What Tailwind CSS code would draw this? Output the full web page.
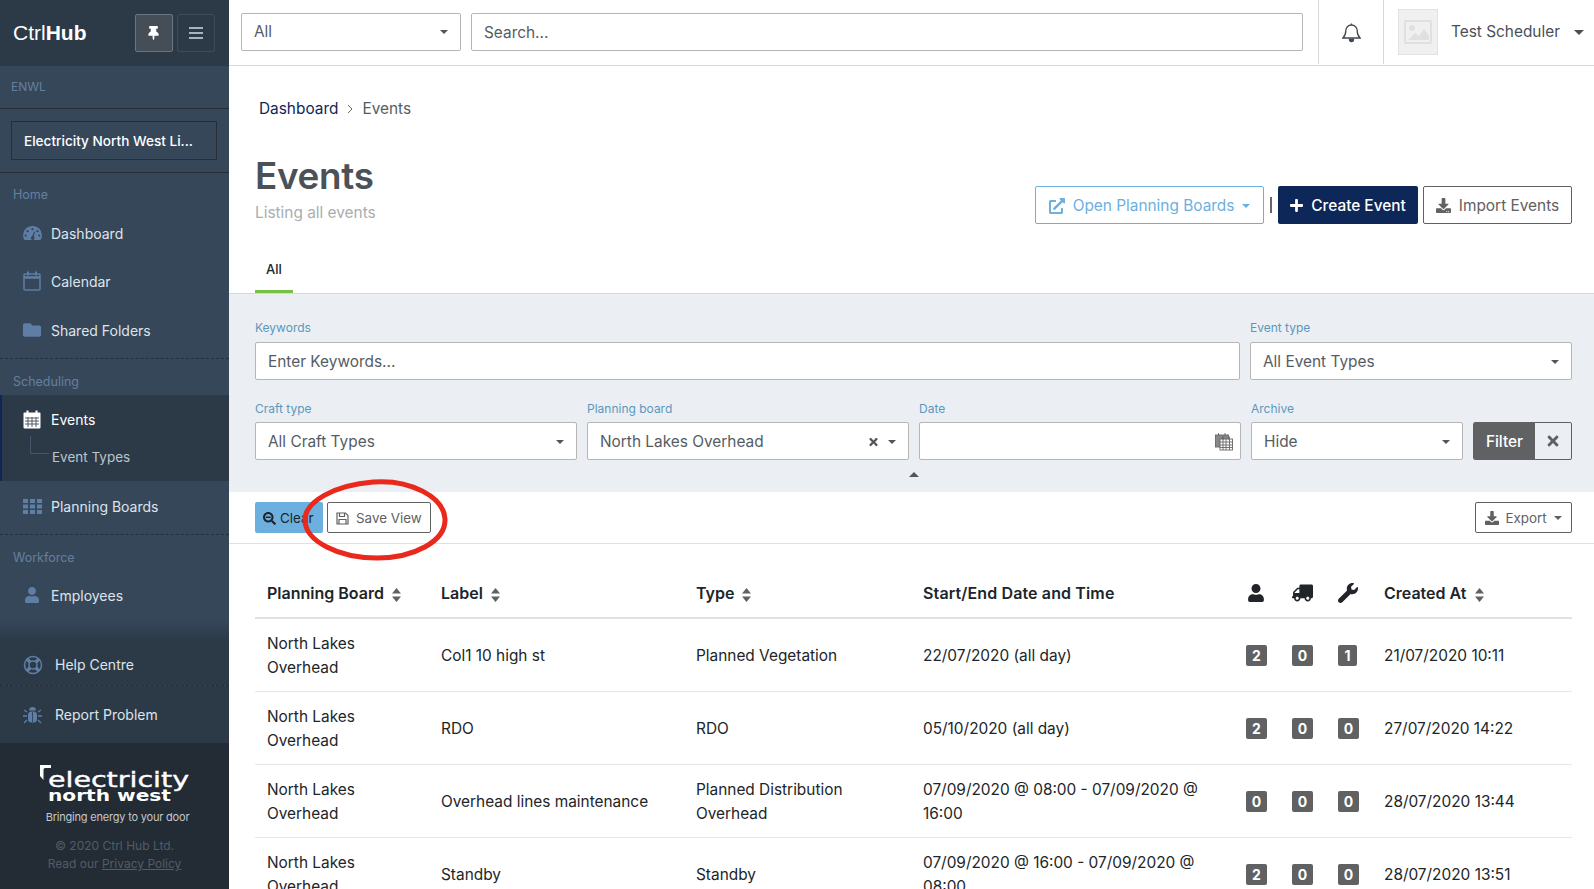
<!DOCTYPE html>
<html lang="en">
<head>
  <meta charset="UTF-8">
  <title>Events - CtrlHub</title>
  <script src="https://cdn.jsdelivr.net/npm/@tailwindcss/browser@4"></script>
</head>
<body class="bg-white font-['Inter',sans-serif] text-[#212529] overflow-hidden">
<div class="relative flex h-[889px] w-[1594px] overflow-hidden">

  <!-- sidebar -->
  <aside class="flex h-full w-[229px] shrink-0 flex-col bg-[#36475a] text-[14px] text-[#dfe4ea]">
    <div class="flex h-[66px] shrink-0 items-center bg-[#2c3a48] pl-[13px]">
      <div class="pb-[1px] font-['Liberation_Sans',sans-serif] text-[21px] leading-none text-white">Ctrl<span class="font-bold">Hub</span></div>
      <div class="ml-[48px] flex gap-[4px]">
        <button class="flex h-[38px] w-[38px] items-center justify-center rounded-[2px] border border-[#6b7580] bg-[#454d57]">
          <svg class="h-[14px] w-[11px] fill-white" viewBox="0 0 384 512"><path d="M298.028 214.267L285.793 96H328c13.255 0 24-10.745 24-24V24c0-13.255-10.745-24-24-24H56C42.745 0 32 10.745 32 24v48c0 13.255 10.745 24 24 24h42.207L85.972 214.267C37.465 236.82 0 277.261 0 328c0 13.255 10.745 24 24 24h136v104.007c0 1.242.289 2.467.845 3.578l24 48c2.941 5.882 11.364 5.893 14.31 0l24-48a8.008 8.008 0 0 0 .845-3.578V352h136c13.255 0 24-10.745 24-24-.001-51.183-37.983-91.42-85.972-113.733z"/></svg>
        </button>
        <button class="flex h-[38px] w-[38px] flex-col items-center justify-center gap-[3px] rounded-[2px] border border-[#3d4b5a]">
          <span class="h-[2px] w-[14px] bg-[#a9b3bd]"></span>
          <span class="h-[2px] w-[14px] bg-[#a9b3bd]"></span>
          <span class="h-[2px] w-[14px] bg-[#a9b3bd]"></span>
        </button>
      </div>
    </div>

    <div class="flex h-[43px] shrink-0 items-center border-b border-[#262f39] pl-[11px] text-[12px] text-[#64809e]">ENWL</div>
    <div class="flex h-[64px] shrink-0 items-center border-b border-[#262f39] px-[11px]">
      <div class="flex h-[39px] w-[206px] items-center border border-[#262f39] pl-[12px] pt-[1px] text-[13.6px] font-medium text-white">Electricity North West Li...</div>
    </div>

    <div class="flex h-[36px] shrink-0 items-end pb-[7px] pl-[13px] text-[12.5px] leading-[15px] text-[#64809e]">Home</div>
    <a class="flex h-[48px] shrink-0 items-center pl-[23px]">
      <svg class="mr-[9px] h-[17px] w-[19px] fill-[#5e7fa3]" viewBox="0 0 20 18"><path fill-rule="evenodd" d="M10 1a9.600 9.600 0 0 0-10 9.600c0 2.200.7 4.200 1.600 5.400h16.800c.9-1.200 1.600-3.200 1.600-5.400A9.600 9.600 0 0 0 10 1zM10 3.200a1.200 1.200 0 1 1 0 2.400 1.200 1.200 0 0 1 0-2.400zM4.800 5.400a1.200 1.200 0 1 1 0 2.400 1.200 1.200 0 0 1 0-2.400zM15.200 5.400a1.200 1.200 0 1 1 0 2.400 1.200 1.200 0 0 1 0-2.400zM2.800 10a1.200 1.200 0 1 1 0 2.400 1.200 1.200 0 0 1 0-2.400zM17.200 10a1.200 1.200 0 1 1 0 2.400 1.200 1.200 0 0 1 0-2.400zM11.800 6.800l.9.300-1.300 5.200a1.900 1.900 0 1 1-1.700-.3z"/></svg>
      Dashboard
    </a>
    <a class="flex h-[48px] shrink-0 items-center pl-[23px]">
      <svg class="mr-[10px] h-[20px] w-[18px] fill-none stroke-[#5e7fa3]" stroke-width="1.500" viewBox="0 0 18 20"><rect x="1" y="3" width="16" height="16" rx="1"/><path d="M1 6.500h16" stroke-width="2.500"/><path d="M5 0.500v4M13 0.500v4" stroke-width="2"/></svg>
      Calendar
    </a>
    <a class="flex h-[48px] shrink-0 items-center pl-[23px] pt-[2px]">
      <svg class="mr-[10px] h-[18px] w-[18px] fill-[#5e7fa3]" viewBox="0 0 512 512"><path d="M464 128H272l-64-64H48C21.490 64 0 85.490 0 112v288c0 26.510 21.490 48 48 48h416c26.510 0 48-21.490 48-48V176c0-26.510-21.490-48-48-48z"/></svg>
      Shared Folders
    </a>
    <div class="mt-[5px] border-b border-dashed border-[#262f39]"></div>

    <div class="flex h-[36px] shrink-0 items-end pb-[6px] pl-[13px] text-[12.5px] leading-[15px] text-[#64809e]">Scheduling</div>
    <div class="h-[86px] shrink-0 border-l-2 border-[#0d2759] bg-[#2c3a48]">
      <a class="flex h-[48px] items-center pl-[21px] text-white">
        <svg class="mr-[10px] h-[19px] w-[18px]" viewBox="0 0 18 19"><rect x="0.500" y="2.500" width="17" height="16" rx="1" fill="#fff"/><path d="M4.500 0.500v4M13.500 0.500v4" stroke="#fff" stroke-width="2"/><path d="M2 8h14M2 11h14M2 14h14M5 7v10M9 7v10M13 7v10" stroke="#2c3a48" stroke-width="0.800"/></svg>
        Events
      </a>
      <div class="relative flex h-[27px] items-center pl-[50px] pt-[2px] text-[13.500px] text-[#bcc4cd]">
        <span class="absolute left-[28px] top-[-7px] h-[18px] w-[19px] border-b border-l border-[#43566b]"></span>
        Event Types
      </div>
    </div>
    <a class="flex h-[48px] shrink-0 items-center pl-[23px] pt-[2px]">
      <svg class="mr-[9px] h-[15px] w-[19px] fill-[#5e7fa3]" viewBox="0 0 19 15"><rect width="5" height="4"/><rect x="7" width="5" height="4"/><rect x="14" width="5" height="4"/><rect y="5.500" width="5" height="4"/><rect x="7" y="5.500" width="5" height="4"/><rect x="14" y="5.500" width="5" height="4"/><rect y="11" width="5" height="4"/><rect x="7" y="11" width="5" height="4"/><rect x="14" y="11" width="5" height="4"/></svg>
      Planning Boards
    </a>
    <div class="mt-[5px] border-b border-dashed border-[#262f39]"></div>

    <div class="flex h-[37px] shrink-0 items-end pb-[7px] pl-[13px] text-[12.5px] leading-[15px] text-[#64809e]">Workforce</div>
    <a class="flex h-[48px] shrink-0 items-center pb-[2px] pl-[25px]">
      <svg class="mr-[12px] h-[16px] w-[14px] fill-[#5e7fa3]" viewBox="0 0 448 512"><path d="M224 256c70.700 0 128-57.300 128-128S294.700 0 224 0 96 57.300 96 128s57.300 128 128 128zm89.600 32h-16.700c-22.200 10.200-46.900 16-72.900 16s-50.600-5.800-72.900-16h-16.700C60.200 288 0 348.200 0 422.400V464c0 26.500 21.500 48 48 48h352c26.500 0 48-21.500 48-48v-41.600c0-74.200-60.200-134.400-134.400-134.400z"/></svg>
      Employees
    </a>

    <div class="h-[20px] shrink-0 bg-linear-to-b from-[#36475a] to-[#2c3a48]"></div>
    <div class="flex h-[45px] shrink-0 items-center bg-[#2c3a48] pl-[23px] pt-[4px]">
      <svg class="mr-[12px] h-[20px] w-[20px]" viewBox="0 0 20 20" fill="none" stroke="#5e7fa3"><circle cx="10" cy="10" r="8.500" stroke-width="1.500"/><circle cx="10" cy="10" r="4" stroke-width="1.500"/><path d="M4 4l3.200 3.200M16 4l-3.200 3.200M4 16l3.200-3.200M16 16l-3.200-3.200" stroke-width="3.500"/></svg>
      Help Centre
    </div>
    <div class="border-b border-dashed border-[#262f39]"></div>
    <div class="flex h-[57px] shrink-0 items-center bg-[#2c3a48] pl-[23px]">
      <svg class="mr-[13px] h-[18px] w-[19px]" viewBox="0 0 19 18" fill="#5e7fa3"><path d="M6 4.500a3.500 3.500 0 0 1 7 0z"/><rect x="5" y="5.500" width="9" height="11" rx="3.500"/><path d="M4 6l-3-2M15 6l3-2M4 10H0M15 10h4M4 14l-3 3M15 14l3 3" stroke="#5e7fa3" stroke-width="1.300"/><path d="M9.500 6v10" stroke="#2c3a48" stroke-width="0.800"/></svg>
      Report Problem
    </div>

    <div class="flex h-[146px] shrink-0 flex-col items-center bg-[#232b35] pt-[20px]">
      <svg class="h-[50px] w-[160px]" viewBox="0 0 160 50">
        <path d="M5 2h11v3H10c-1 0-1.500 1-1.500 2v10L5 13z" fill="#fff"/>
        <text x="13" y="24" textLength="141" lengthAdjust="spacingAndGlyphs" fill="#fff" stroke="#fff" stroke-width="0.400" font-family="DejaVu Sans" font-size="22">electricity</text>
        <text x="13" y="38" textLength="123" lengthAdjust="spacingAndGlyphs" fill="#fff" font-family="DejaVu Sans" font-weight="bold" font-size="15">north west</text>
      </svg>
      <div class="ml-[6px] mt-[-4px] text-[11px] leading-[16px] tracking-[-0.2px] text-[#c4c8cc]">Bringing energy to your door</div>
      <div class="mt-[12px] text-center text-[12px] leading-[18px] text-[#535c66]">© 2020 Ctrl Hub Ltd.<br>Read our <span class="underline">Privacy Policy</span></div>
    </div>
  </aside>

  <!-- main -->
  <main class="flex min-w-0 flex-1 flex-col">
    <header class="flex h-[66px] shrink-0 items-center border-b border-[#d8d8d8] pb-[1px] pl-[12px]">
      <div class="flex h-[38px] w-[220px] items-center justify-between rounded-[2px] border border-[#b5b5b5] pl-[12px] pr-[12px] text-[15.4px] text-[#555c63]">
        All
        <span class="h-0 w-0 border-x-[4px] border-t-[4px] border-x-transparent border-t-[#555]"></span>
      </div>
      <input class="ml-[10px] h-[38px] w-[832px] rounded-[2px] border border-[#b5b5b5] px-[12px] text-[15.4px] placeholder:text-[#555c63]" placeholder="Search...">
      <div class="ml-[15px] flex h-full w-[66px] items-center justify-center border-x border-[#d8d8d8]">
        <svg class="h-[21px] w-[19px] fill-none stroke-[#3f464d]" stroke-width="1.300" viewBox="0 0 19 21"><path d="M9.500 1.500v1.500M9.500 3c-3.400 0-5.700 2.600-5.700 5.700 0 4.600-1.500 5.800-3 7.300h17.400c-1.500-1.500-3-2.700-3-7.300C15.200 5.600 12.900 3 9.500 3z"/><path d="M7.500 17.500a2 2 0 0 0 4 0z" fill="#3f464d"/></svg>
      </div>
      <div class="ml-[14px] flex h-[46px] w-[40px] items-center justify-center border border-[#e2e2e2] bg-[#f0f0f0]">
        <svg class="h-[24px] w-[28px]" viewBox="0 0 28 24"><rect x="1" y="1" width="26" height="22" rx="1" fill="none" stroke="#e0e0e0" stroke-width="2"/><circle cx="8" cy="8" r="3" fill="#e0e0e0"/><path d="M4 20l7-7 4 3 5-7 5 7v4z" fill="#e0e0e0"/></svg>
      </div>
      <div class="ml-[13px] text-[15.4px] text-[#4a5057]">Test Scheduler</div>
      <span class="ml-[14px] h-0 w-0 border-x-[5px] border-t-[5px] border-x-transparent border-t-[#4a5057]"></span>
    </header>

    <div class="shrink-0 pl-[26px] pr-[22px]">
      <div class="mt-[31px] flex h-[24px] items-center pl-[4px] text-[15.4px]">
        <span class="text-[#0d2759]">Dashboard</span>
        <svg class="mx-[9px] h-[10px] w-[6px] fill-none stroke-[#666]" viewBox="0 0 6 10"><path d="M1 1l4 4-4 4"/></svg>
        <span class="text-[#555c63]">Events</span>
      </div>
      <div class="mt-[33px] flex items-end justify-between">
        <div>
          <h1 class="text-[36.8px] font-semibold leading-[44px] tracking-[-0.3px] text-[#4b5157]">Events</h1>
          <div class="mt-[2px] pt-[1px] text-[15.4px] leading-[23px] text-[#a9adb1]">Listing all events</div>
        </div>
        <div class="flex items-center text-[15.4px]">
          <button class="flex h-[38px] w-[229px] items-center justify-center rounded-[2px] border border-[#6cb0e0] pt-[1px] text-[#6cb0e0]">
            <svg class="mr-[8px] h-[16px] w-[16px] fill-[#6cb0e0]" viewBox="0 0 512 512"><path d="M432 320H400a16 16 0 0 0-16 16V448H64V128H208a16 16 0 0 0 16-16V80a16 16 0 0 0-16-16H48A48 48 0 0 0 0 112V464a48 48 0 0 0 48 48H400a48 48 0 0 0 48-48V336A16 16 0 0 0 432 320ZM488 0h-128c-21.370 0-32.050 25.910-17 41l35.730 35.730L135 320.370a24 24 0 0 0 0 34L157.670 377a24 24 0 0 0 34 0L435.280 133.320 471 169c15 15 41 4.500 41-17V24A24 24 0 0 0 488 0Z"/></svg>
            Open Planning Boards
            <span class="ml-[8px] h-0 w-0 border-x-[4.500px] border-t-[4.500px] border-x-transparent border-t-[#6cb0e0]"></span>
          </button>
          <span class="mx-[6px] h-[16px] w-[2px] bg-[#666]"></span>
          <button class="flex h-[38px] w-[140px] items-center justify-center rounded-[2px] bg-[#0d2759] pt-[1px] font-medium text-white">
            <svg class="mr-[8px] h-[15px] w-[13px] fill-white" viewBox="0 0 448 512"><path d="M416 208H272V64c0-17.670-14.330-32-32-32h-32c-17.670 0-32 14.330-32 32v144H32c-17.670 0-32 14.330-32 32v32c0 17.670 14.330 32 32 32h144v144c0 17.670 14.330 32 32 32h32c17.670 0 32-14.330 32-32V304h144c17.670 0 32-14.330 32-32v-32c0-17.670-14.330-32-32-32z"/></svg>
            Create Event
          </button>
          <button class="ml-[5px] flex h-[38px] w-[149px] items-center justify-center rounded-[2px] border border-[#5f6163] pt-[1px] text-[#5f6163]">
            <svg class="mr-[8px] h-[15px] w-[15px] fill-[#5f6163]" viewBox="0 0 512 512"><path d="M216 0h80c13.300 0 24 10.700 24 24v168h87.700c17.800 0 26.700 21.500 14.100 34.100L269.700 378.300c-7.500 7.500-19.800 7.500-27.300 0L90.100 226.100c-12.600-12.600-3.700-34.100 14.100-34.100H192V24c0-13.300 10.700-24 24-24zm296 376v112c0 13.300-10.700 24-24 24H24c-13.300 0-24-10.700-24-24V376c0-13.300 10.700-24 24-24h146.700l49 49c20.100 20.100 52.500 20.100 72.600 0l49-49H488c13.300 0 24 10.700 24 24zm-124 88c0-11-9-20-20-20s-20 9-20 20 9 20 20 20 20-9 20-20zm64 0c0-11-9-20-20-20s-20 9-20 20 9 20 20 20 20-9 20-20z"/></svg>
            Import Events
          </button>
        </div>
      </div>
      <div class="mt-[25px] flex h-[44px] w-[38px] items-center justify-center border-b-[3px] border-[#7ac143] text-[13px] font-medium text-[#212529]">All</div>
    </div>

    <!-- filters -->
    <section class="h-[199px] shrink-0 border-t border-[#d5d9dd] bg-[#ebeff3] pl-[26px] pr-[22px] pt-[27px] text-[15.4px] text-[#555c63]">
      <div class="flex gap-[10px]">
        <div class="w-[985px]">
          <div class="mb-[7px] h-[14px] text-[12px] leading-[14px] text-[#5b97bc]">Keywords</div>
          <input class="h-[38px] w-full rounded-[2px] border border-[#b5b5b5] bg-white px-[12px] placeholder:text-[#555c63]" placeholder="Enter Keywords...">
        </div>
        <div class="w-[322px]">
          <div class="mb-[7px] h-[14px] text-[12px] leading-[14px] text-[#5b97bc]">Event type</div>
          <div class="flex h-[38px] items-center justify-between rounded-[2px] border border-[#b5b5b5] bg-white pl-[12px] pr-[12px] pt-[1px]">
            All Event Types
            <span class="h-0 w-0 border-x-[4px] border-t-[4px] border-x-transparent border-t-[#555]"></span>
          </div>
        </div>
      </div>
      <div class="mt-[22px] flex">
        <div class="w-[322px]">
          <div class="mb-[6px] h-[14px] text-[12px] leading-[14px] text-[#5b97bc]">Craft type</div>
          <div class="flex h-[38px] items-center justify-between rounded-[2px] border border-[#b5b5b5] bg-white pl-[12px] pr-[12px] pt-[1px]">
            All Craft Types
            <span class="h-0 w-0 border-x-[4px] border-t-[4px] border-x-transparent border-t-[#555]"></span>
          </div>
        </div>
        <div class="ml-[10px] w-[322px]">
          <div class="mb-[6px] h-[14px] text-[12px] leading-[14px] text-[#5b97bc]">Planning board</div>
          <div class="flex h-[38px] items-center rounded-[2px] border border-[#b5b5b5] bg-white pl-[12px] pr-[12px] pt-[1px]">
            North Lakes Overhead
            <svg class="ml-auto mr-[10px] h-[12px] w-[9px] fill-[#555]" viewBox="0 0 352 512"><path d="M242.720 256l100.070-100.070c12.280-12.280 12.280-32.190 0-44.480l-22.240-22.240c-12.280-12.280-32.190-12.280-44.480 0L176 189.280 75.930 89.210c-12.280-12.280-32.190-12.280-44.480 0L9.210 111.450c-12.280 12.280-12.280 32.190 0 44.480L109.280 256 9.210 356.070c-12.280 12.280-12.280 32.190 0 44.480l22.240 22.240c12.280 12.280 32.200 12.280 44.480 0L176 322.720l100.070 100.070c12.280 12.280 32.200 12.280 44.480 0l22.240-22.240c12.280-12.280 12.280-32.190 0-44.480L242.720 256z"/></svg>
            <span class="h-0 w-0 border-x-[4px] border-t-[4px] border-x-transparent border-t-[#555]"></span>
          </div>
        </div>
        <div class="ml-[10px] w-[322px]">
          <div class="mb-[6px] h-[14px] text-[12px] leading-[14px] text-[#5b97bc]">Date</div>
          <div class="flex h-[38px] items-center justify-end rounded-[2px] border border-[#b5b5b5] bg-white pr-[7px]">
            <svg class="h-[19px] w-[18px] fill-none stroke-[#666]" stroke-width="0.900" viewBox="0 0 18 19"><rect x="0.500" y="3" width="13" height="12" fill="#888"/><path d="M3.500 1v3M10 1v3"/><rect x="5" y="7" width="12.500" height="11" fill="#fff"/><path d="M5 10h12.500M5 13h12.500M5 15.500h12.500M8 7v11M11 7v11M14.500 7v11"/><path d="M8 4.500v3M14 4.500v3" stroke-width="1.500"/></svg>
          </div>
        </div>
        <div class="ml-[10px] w-[212px]">
          <div class="mb-[6px] h-[14px] text-[12px] leading-[14px] text-[#5b97bc]">Archive</div>
          <div class="flex h-[38px] items-center justify-between rounded-[2px] border border-[#b5b5b5] bg-white pl-[12px] pr-[12px] pt-[1px]">
            Hide
            <span class="h-0 w-0 border-x-[4px] border-t-[4px] border-x-transparent border-t-[#555]"></span>
          </div>
        </div>
        <div class="ml-[10px] mt-[20px] flex h-[38px] w-[99px] overflow-hidden rounded-[2px] border border-[#5f6163]">
          <div class="flex w-[61px] items-center justify-center bg-[#5f6163] pt-[1px] font-medium text-white">Filter</div>
          <div class="flex flex-1 items-center justify-center">
            <svg class="h-[16px] w-[12px] fill-[#5f6163]" viewBox="0 0 352 512"><path d="M242.720 256l100.070-100.070c12.280-12.280 12.280-32.190 0-44.480l-22.240-22.240c-12.280-12.280-32.190-12.280-44.480 0L176 189.280 75.930 89.210c-12.280-12.280-32.190-12.280-44.480 0L9.210 111.450c-12.280 12.280-12.280 32.190 0 44.480L109.280 256 9.210 356.070c-12.280 12.280-12.280 32.190 0 44.480l22.240 22.240c12.280 12.280 32.200 12.280 44.480 0L176 322.720l100.070 100.070c12.280 12.280 32.200 12.280 44.480 0l22.240-22.240c12.280-12.280 12.280-32.190 0-44.480L242.720 256z"/></svg>
          </div>
        </div>
      </div>
      <div class="ml-[654px] mt-[12px] h-0 w-0 border-x-[5px] border-b-[5px] border-x-transparent border-b-[#555]"></div>
    </section>

    <!-- toolbar -->
    <div class="flex h-[52px] shrink-0 items-start justify-between border-b border-[#e0e0e0] pl-[26px] pr-[22px] pt-[10px] text-[13.4px]">
      <div class="flex gap-[4px]">
        <button class="flex h-[31px] w-[68px] items-center rounded-[2px] bg-[#6cb0e0] pl-[8px] pt-[1px] text-[#212529]">
          <svg class="mr-[4px] h-[13px] w-[13px] fill-[#212529]" viewBox="0 0 512 512"><path d="M505 442.700L405.300 343c-4.500-4.500-10.600-7-17-7H372c27.600-35.300 44-79.700 44-128C416 93.100 322.900 0 208 0S0 93.100 0 208s93.100 208 208 208c48.300 0 92.700-16.400 128-44v16.300c0 6.400 2.500 12.500 7 17l99.700 99.700c9.400 9.400 24.600 9.400 33.900 0l28.300-28.300c9.400-9.400 9.400-24.600.1-34zM208 336c-70.700 0-128-57.200-128-128 0-70.700 57.200-128 128-128 70.700 0 128 57.200 128 128 0 70.700-57.200 128-128 128z"/><rect x="112" y="180" width="192" height="56" rx="10"/></svg>
          Clear
        </button>
        <button class="flex h-[31px] w-[104px] items-center rounded-[2px] border border-[#5f6163] pl-[8px] pt-[1px] text-[#5f6163]">
          <svg class="mr-[7px] h-[13px] w-[13px] fill-none stroke-[#5f6163]" stroke-width="1.200" viewBox="0 0 13 13"><path d="M1 1h8.500L12 3.500V12H1z"/><path d="M3.500 1v3.500h5V1M3 12V7.500h7V12"/></svg>
          Save View
        </button>
      </div>
      <button class="flex h-[31px] w-[97px] items-center justify-center rounded-[2px] border border-[#5f6163] pt-[1px] text-[#5f6163]">
        <svg class="mr-[6px] h-[14px] w-[14px] fill-[#5f6163]" viewBox="0 0 512 512"><path d="M216 0h80c13.300 0 24 10.700 24 24v168h87.700c17.800 0 26.700 21.500 14.100 34.100L269.700 378.300c-7.500 7.500-19.800 7.500-27.300 0L90.100 226.100c-12.600-12.600-3.700-34.100 14.100-34.100H192V24c0-13.300 10.700-24 24-24zm296 376v112c0 13.300-10.700 24-24 24H24c-13.300 0-24-10.700-24-24V376c0-13.300 10.700-24 24-24h146.700l49 49c20.100 20.100 52.500 20.100 72.600 0l49-49H488c13.300 0 24 10.700 24 24z"/></svg>
        Export
        <span class="ml-[7px] h-0 w-0 border-x-[4px] border-t-[4px] border-x-transparent border-t-[#5f6163]"></span>
      </button>
    </div>

    <!-- table -->
    <div class="min-h-0 flex-1 overflow-hidden pl-[26px] pr-[22px] pt-[25px]">
      <table class="w-[1317px] table-fixed border-collapse text-left text-[15.4px] leading-[24px]">
        <colgroup>
          <col class="w-[174px]"><col class="w-[255px]"><col class="w-[227px]"><col class="w-[322px]"><col class="w-[47px]"><col class="w-[46px]"><col class="w-[46px]"><col>
        </colgroup>
        <thead>
          <tr class="h-[49px] border-b-2 border-[#dee2e6] text-[16px]">
            <th class="px-[12px] font-semibold">Planning Board <svg class="ml-[4px] inline h-[14px] w-[9px] fill-[#5f6163]" viewBox="0 0 9 14"><path d="M4.500 0L9 5.500H0zM4.500 14L0 8.500h9z"/></svg></th>
            <th class="px-[12px] font-semibold">Label <svg class="ml-[4px] inline h-[14px] w-[9px] fill-[#5f6163]" viewBox="0 0 9 14"><path d="M4.500 0L9 5.500H0zM4.500 14L0 8.500h9z"/></svg></th>
            <th class="px-[12px] font-semibold">Type <svg class="ml-[4px] inline h-[14px] w-[9px] fill-[#5f6163]" viewBox="0 0 9 14"><path d="M4.500 0L9 5.500H0zM4.500 14L0 8.500h9z"/></svg></th>
            <th class="px-[12px] font-semibold tracking-[0.13px]">Start/End Date and Time</th>
            <th class="pl-[15px]"><svg class="h-[18px] w-[16px] fill-[#212529]" viewBox="0 0 448 512"><path d="M224 256c70.700 0 128-57.300 128-128S294.700 0 224 0 96 57.300 96 128s57.300 128 128 128zm89.600 32h-16.700c-22.200 10.200-46.900 16-72.900 16s-50.600-5.800-72.900-16h-16.700C60.200 288 0 348.200 0 422.400V464c0 26.500 21.500 48 48 48h352c26.500 0 48-21.500 48-48v-41.600c0-74.200-60.200-134.400-134.400-134.400z"/></svg></th>
            <th class="pl-[12px]"><svg class="h-[18px] w-[21px] -scale-x-100 fill-[#212529]" viewBox="0 0 640 512"><path d="M624 352h-16V243.900c0-12.700-5.100-24.900-14.100-33.900L494 110.100c-9-9-21.200-14.100-33.900-14.100H416V48c0-26.500-21.500-48-48-48H48C21.500 0 0 21.500 0 48v320c0 26.500 21.500 48 48 48h16c0 53 43 96 96 96s96-43 96-96h128c0 53 43 96 96 96s96-43 96-96h48c8.800 0 16-7.200 16-16v-32c0-8.800-7.200-16-16-16zM160 464c-26.500 0-48-21.500-48-48s21.500-48 48-48 48 21.500 48 48-21.500 48-48 48zm320 0c-26.500 0-48-21.500-48-48s21.500-48 48-48 48 21.500 48 48-21.500 48-48 48zm80-208H416V144h44.100l99.900 99.900V256z"/></svg></th>
            <th class="pl-[12px]"><svg class="h-[20px] w-[20px] -scale-x-100 fill-[#212529]" viewBox="0 0 512 512"><path d="M507.730 109.100c-2.240-9.030-13.540-12.090-20.120-5.510l-74.360 74.360-67.880-11.310-11.310-67.880 74.360-74.360c6.620-6.620 3.430-17.900-5.660-20.160-47.380-11.740-99.550.91-136.580 37.930-39.640 39.640-50.550 97.100-34.050 147.200L18.740 402.760c-24.990 24.990-24.990 65.510 0 90.500 24.990 24.990 65.510 24.990 90.500 0l213.210-213.210c50.120 16.710 107.470 5.680 147.370-34.220 37.070-37.070 49.700-89.320 37.910-136.730z" transform="matrix(-1 0 0 1 512 0)"/></svg></th>
            <th class="px-[12px] font-semibold">Created At <svg class="ml-[4px] inline h-[14px] w-[9px] fill-[#5f6163]" viewBox="0 0 9 14"><path d="M4.500 0L9 5.500H0zM4.500 14L0 8.500h9z"/></svg></th>
          </tr>
        </thead>
        <tbody class="[&_td]:pt-[2px]">
          <tr class="h-[73px] border-b border-[#e4e6e8]">
            <td class="px-[12px]">North Lakes Overhead</td>
            <td class="px-[12px]">Col1 10 high st</td>
            <td class="px-[12px]">Planned Vegetation</td>
            <td class="px-[12px]">22/07/2020 (all day)</td>
            <td class="pl-[13px]"><span class="flex h-[21px] w-[21px] items-center justify-center rounded-[2px] bg-[#5f6163] text-[14px] font-bold text-white">2</span></td>
            <td class="pl-[12px]"><span class="flex h-[21px] w-[21px] items-center justify-center rounded-[2px] bg-[#5f6163] text-[14px] font-bold text-white">0</span></td>
            <td class="pl-[12px]"><span class="flex h-[21px] w-[19px] items-center justify-center rounded-[2px] bg-[#5f6163] text-[14px] font-bold text-white">1</span></td>
            <td class="px-[12px]">21/07/2020 10:11</td>
          </tr>
          <tr class="h-[73px] border-b border-[#e4e6e8]">
            <td class="px-[12px]">North Lakes Overhead</td>
            <td class="px-[12px]">RDO</td>
            <td class="px-[12px]">RDO</td>
            <td class="px-[12px]">05/10/2020 (all day)</td>
            <td class="pl-[13px]"><span class="flex h-[21px] w-[21px] items-center justify-center rounded-[2px] bg-[#5f6163] text-[14px] font-bold text-white">2</span></td>
            <td class="pl-[12px]"><span class="flex h-[21px] w-[21px] items-center justify-center rounded-[2px] bg-[#5f6163] text-[14px] font-bold text-white">0</span></td>
            <td class="pl-[12px]"><span class="flex h-[21px] w-[21px] items-center justify-center rounded-[2px] bg-[#5f6163] text-[14px] font-bold text-white">0</span></td>
            <td class="px-[12px]">27/07/2020 14:22</td>
          </tr>
          <tr class="h-[73px] border-b border-[#e4e6e8]">
            <td class="px-[12px]">North Lakes Overhead</td>
            <td class="px-[12px]">Overhead lines maintenance</td>
            <td class="px-[12px]">Planned Distribution Overhead</td>
            <td class="px-[12px]">07/09/2020 @ 08:00 - 07/09/2020 @ 16:00</td>
            <td class="pl-[13px]"><span class="flex h-[21px] w-[21px] items-center justify-center rounded-[2px] bg-[#5f6163] text-[14px] font-bold text-white">0</span></td>
            <td class="pl-[12px]"><span class="flex h-[21px] w-[21px] items-center justify-center rounded-[2px] bg-[#5f6163] text-[14px] font-bold text-white">0</span></td>
            <td class="pl-[12px]"><span class="flex h-[21px] w-[21px] items-center justify-center rounded-[2px] bg-[#5f6163] text-[14px] font-bold text-white">0</span></td>
            <td class="px-[12px]">28/07/2020 13:44</td>
          </tr>
          <tr class="h-[73px] border-b border-[#e4e6e8]">
            <td class="px-[12px]">North Lakes Overhead</td>
            <td class="px-[12px]">Standby</td>
            <td class="px-[12px]">Standby</td>
            <td class="px-[12px]">07/09/2020 @ 16:00 - 07/09/2020 @ 08:00</td>
            <td class="pl-[13px]"><span class="flex h-[21px] w-[21px] items-center justify-center rounded-[2px] bg-[#5f6163] text-[14px] font-bold text-white">2</span></td>
            <td class="pl-[12px]"><span class="flex h-[21px] w-[21px] items-center justify-center rounded-[2px] bg-[#5f6163] text-[14px] font-bold text-white">0</span></td>
            <td class="pl-[12px]"><span class="flex h-[21px] w-[21px] items-center justify-center rounded-[2px] bg-[#5f6163] text-[14px] font-bold text-white">0</span></td>
            <td class="px-[12px]">28/07/2020 13:51</td>
          </tr>
        </tbody>
      </table>
    </div>
  </main>

  <!-- red annotation drawn over the screenshot -->
  <svg class="pointer-events-none absolute left-[301px] top-[477px] h-[86px] w-[148px] fill-none stroke-[#e8291c]" stroke-width="5" viewBox="0 0 148 86">
    <path d="M72 5C109 2 143 20 144 42c1 22-31 39-68 39C37 81 5 64 4 44 3 24 35 8 72 5z"/>
  </svg>
</div>
</body>
</html>
